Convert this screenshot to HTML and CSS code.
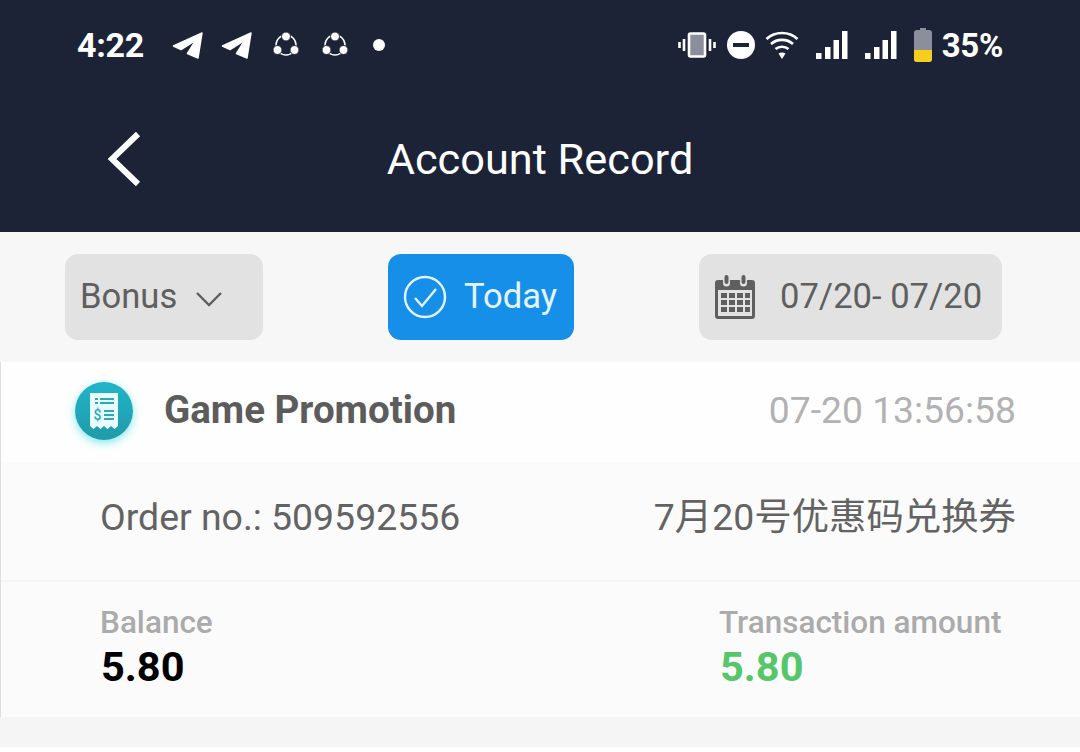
FILE: index.html

```html
<!DOCTYPE html>
<html lang="en">
<head>
  <meta charset="UTF-8">
  <title>Account Record</title>
  <link rel="stylesheet" href="styles.css">
</head>
<body>

  <div class="top">
    <div class="status">
      <div class="status-left">
        <span class="time">4:22</span>
        <svg class="ic-tg" viewBox="0 0 32 28"><path d="M1.500 15 30 2 26 27 15.500 22.500 24 9 9 18.500Z" fill="#fff" stroke="#fff" stroke-width="1.500" stroke-linejoin="round"/></svg>
        <svg class="ic-tg" viewBox="0 0 32 28"><path d="M1.500 15 30 2 26 27 15.500 22.500 24 9 9 18.500Z" fill="#fff" stroke="#fff" stroke-width="1.500" stroke-linejoin="round"/></svg>
        <svg class="ic-share" viewBox="0 0 26 26"><circle cx="13" cy="13" r="10" fill="none" stroke="#fff" stroke-width="1.500"/><g fill="#fff" stroke="#1c2336"><circle cx="13" cy="4.500" r="4.500"/><circle cx="4.500" cy="18" r="4.500"/><circle cx="21.500" cy="18" r="4.500"/></g></svg>
        <svg class="ic-share" viewBox="0 0 26 26"><circle cx="13" cy="13" r="10" fill="none" stroke="#fff" stroke-width="1.500"/><g fill="#fff" stroke="#1c2336"><circle cx="13" cy="4.500" r="4.500"/><circle cx="4.500" cy="18" r="4.500"/><circle cx="21.500" cy="18" r="4.500"/></g></svg>
        <span class="dot"></span>
      </div>
      <div class="status-right">
        <svg class="ic-vib" viewBox="0 0 38 26"><rect x="11" y="1.500" width="16" height="23" rx="1.500" fill="#8a8f9b" stroke="#fff" stroke-width="2.600"/><path d="M6 7v12M32 7v12M1.500 10v6M36.500 10v6" stroke="#fff" stroke-width="2.600" fill="none"/></svg>
        <svg class="ic-dnd" viewBox="0 0 28 28"><circle cx="14" cy="14" r="14" fill="#fff"/><rect x="6" y="12" width="16" height="4" fill="#1c2336"/></svg>
        <svg class="ic-wifi" viewBox="0 0 34 30"><path d="M1.500 9C10 1 24 1 32.500 9M6 14c6-5.500 16-5.500 22 0M10.500 19c3.500-3 9.500-3 13 0" fill="none" stroke="#fff" stroke-width="2.600"/><path d="M13.500 23.500c2-1.300 5-1.300 7 0L17 29Z" fill="#fff"/></svg>
        <svg class="ic-sig" viewBox="0 0 32 28"><path d="M0 22h5.500v6H0zM9 16h5.500v12H9zM17.500 9H23v19h-5.500zM26 0h5.500v28H26z" fill="#fff"/></svg>
        <svg class="ic-sig" viewBox="0 0 32 28"><path d="M0 22h5.500v6H0zM9 16h5.500v12H9zM17.500 9H23v19h-5.500zM26 0h5.500v28H26z" fill="#fff"/></svg>
        <svg class="ic-batt" viewBox="0 0 18 34"><path d="M6 0h6v2h3a3 3 0 0 1 3 3v26a3 3 0 0 1-3 3H3a3 3 0 0 1-3-3V5a3 3 0 0 1 3-3h3Z" fill="#8a8f9b"/><path d="M0 22h18v9a3 3 0 0 1-3 3H3a3 3 0 0 1-3-3Z" fill="#f6cf1e"/></svg>
        <span class="pct">35%</span>
      </div>
    </div>
    <div class="title-bar">
      <svg class="back" viewBox="0 0 34 56"><path d="M31 3 5 28l26 25" fill="none" stroke="#fff" stroke-width="6"/></svg>
      <h1>Account Record</h1>
    </div>
  </div>

  <div class="filters">
    <div class="pill pill-type">
      <span>Bonus</span>
      <svg class="chev" viewBox="0 0 28 16"><path d="M2 2l12 12L26 2" fill="none" stroke="#5f5f5f" stroke-width="2.400"/></svg>
    </div>
    <div class="pill pill-today">
      <svg class="check" viewBox="0 0 44 44"><circle cx="22" cy="22" r="20" fill="none" stroke="#e3f4ff" stroke-width="2.400"/><path d="M12 23l7 8 14-17" fill="none" stroke="#e3f4ff" stroke-width="2.400"/></svg>
      <span>Today</span>
    </div>
    <div class="pill pill-date">
      <svg class="cal" viewBox="0 0 40 44"><path d="M3 5h5v3a3.500 3.500 0 0 0 7 0V5h10v3a3.500 3.500 0 0 0 7 0V5h5a3 3 0 0 1 3 3v33a3 3 0 0 1-3 3H3a3 3 0 0 1-3-3V8a3 3 0 0 1 3-3Z" fill="#5f5f5f"/><rect x="9.500" y="0" width="4" height="9" rx="2" fill="#5f5f5f"/><rect x="26.500" y="0" width="4" height="9" rx="2" fill="#5f5f5f"/><rect x="3" y="15" width="34" height="26" fill="#e2e2e2"/><path d="M6 18h6v5H6zM14 18h6v5h-6zM22 18h6v5h-6zM30 18h5v5h-5zM6 25h6v5H6zM14 25h6v5h-6zM22 25h6v5h-6zM30 25h5v5h-5zM6 32h6v5H6zM14 32h6v5h-6zM22 32h6v5h-6zM30 32h5v5h-5z" fill="#5f5f5f"/></svg>
      <span>07/20- 07/20</span>
    </div>
  </div>

  <div class="record">
    <div class="rec-head">
      <div class="rec-name">
        <span class="badge">
          <svg class="receipt" viewBox="0 0 28 36"><path d="M0 0h28v33l-3.500 3-3.500-3-3.500 3-3.500-3-3.500 3-3.500-3-3.500 3L0 33Z" fill="#eafbfb"/><path d="M5 5h3v2H5zM5 9h3v2H5zM10 5h14v2H10zM10 9h14v2H10zM14 17h10v2H14zM14 21h10v2H14zM14 25h10v2H14z" fill="#2aa9b7"/><text class="dollar" x="3.500" y="27">$</text></svg>
        </span>
        <span class="name">Game Promotion</span>
      </div>
      <span class="stamp">07-20 13:56:58</span>
    </div>
    <div class="rec-order">
      <span>Order no.: 509592556</span>
      <span class="note">7月20号优惠码兑换券</span>
    </div>
    <div class="rec-nums">
      <div class="num">
        <span class="num-label">Balance</span>
        <span class="num-val">5.80</span>
      </div>
      <div class="num num-right">
        <span class="num-label">Transaction amount</span>
        <span class="num-val green">5.80</span>
      </div>
    </div>
  </div>
  <div class="next-record"></div>

</body>
</html>
```

FILE: styles.css

```css
html, body {
  height: 100%;
}

body {
  font-family: Roboto, "Noto Sans CJK SC", sans-serif;
  background: #f5f5f5;
  margin: 0;
  overflow: hidden;
}

.top {
  background: #1c2336;
  height: 232px;
  color: white;
}

.status {
  height: 90px;
  padding: 0 77px;
  display: flex;
  justify-content: space-between;
  align-items: center;
}

.status-left, .status-right {
  display: flex;
  align-items: center;
}

.time, .pct {
  font-size: 34px;
  font-weight: 700;
  letter-spacing: -0.3px;
}

.pct { font-size: 33px; margin-left: 10px; }

.ic-tg { width: 32px; height: 28px; margin-left: 17px; }
.time + .ic-tg { margin-left: 28px; }
.ic-share { width: 26px; height: 26px; margin-left: 23px; }
.ic-tg + .ic-share { margin-left: 20px; }
.dot { width: 12px; height: 12px; margin-left: 25px; background: white; border-radius: 50%; }

.ic-vib { width: 38px; height: 26px; }
.ic-dnd { width: 28px; height: 28px; margin-left: 11px; }
.ic-wifi { width: 34px; height: 30px; margin-left: 10px; }
.ic-sig { width: 32px; height: 28px; margin-left: 17px; }
.ic-batt { width: 18px; height: 34px; margin-left: 17px; }

.title-bar {
  height: 142px;
  position: relative;
  display: flex;
  justify-content: center;
  align-items: center;
}

.title-bar h1 {
  font-size: 43.300px;
  font-weight: 400;
  margin: 0 0 4px;
}

.back {
  position: absolute;
  left: 107px;
  top: 41px;
  width: 34px;
  height: 56px;
}

.filters {
  height: 130px;
  padding: 22px 78px 0 65px;
  box-sizing: border-box;
  background: #f7f7f7;
  display: flex;
  justify-content: space-between;
  align-items: flex-start;
}

.pill {
  height: 86px;
  border-radius: 13px;
  display: flex;
  align-items: center;
  background: #e2e2e2;
  color: #5f5f5f;
  font-size: 34.600px;
}

.pill span {
  margin-bottom: 3px;
}

.pill-type { width: 198px; padding-left: 15px; box-sizing: border-box; }
.chev { width: 28px; height: 16px; margin-left: 18px; margin-top: 4px; }

.pill-today { width: 186px; background: #168fe8; color: #e3f4ff; padding-left: 15px; box-sizing: border-box; }
.check { width: 44px; height: 44px; margin-right: 17px; }

.pill-date { width: 303px; padding-left: 16px; box-sizing: border-box; }
.cal { width: 40px; height: 44px; margin-right: 25px; }

.record {
  background: #fbfbfb;
  height: 355px;
  border-left: 1px solid #dedede;
}

.rec-head {
  height: 100px;
  background: #fefefe;
  padding: 0 64px 5px 74px;
  display: flex;
  justify-content: space-between;
  align-items: center;
  box-sizing: border-box;
}

.rec-name {
  display: flex;
  align-items: center;
}

.badge {
  width: 58px;
  height: 58px;
  margin-top: 3px;
  border-radius: 50%;
  background: linear-gradient(#22b4c9, #1f9aa8);
  box-shadow: 0 3px 8px rgba(50, 220, 220, 0.6);
  display: flex;
  justify-content: center;
  align-items: center;
}

.receipt { width: 28px; height: 36px; }

.dollar {
  font-size: 14px;
  font-weight: 500;
  fill: #2aa9b7;
}

.name {
  font-size: 38.500px;
  font-weight: 700;
  color: #5c5c5c;
  margin-left: 31px;
}

.stamp {
  font-size: 37.300px;
  color: #b2b2b2;
}

.rec-order {
  height: 120px;
  padding: 0 64px 8px 99px;
  display: flex;
  justify-content: space-between;
  align-items: center;
  border-bottom: 2px solid #f4f4f4;
  box-sizing: border-box;
  font-size: 37.400px;
  color: #636363;
}

.note {
  margin-bottom: 6px;
}

.rec-nums {
  height: 135px;
  padding: 23px 78px 0 99px;
  box-sizing: border-box;
  display: flex;
  justify-content: space-between;
}

.num {
  display: flex;
  flex-direction: column;
}

.num-right { width: 283px; }

.num-label {
  font-size: 31.500px;
  font-weight: 500;
  color: #ababab;
  line-height: 36px;
  white-space: nowrap;
}

.num-val {
  font-size: 41.500px;
  font-weight: 700;
  color: #000;
  line-height: 46px;
  margin: 3px 0 0 1px;
}

.green { color: #55c76a; }

.next-record {
  height: 5px;
  margin-top: 30px;
  background: #fefefe;
}
```
